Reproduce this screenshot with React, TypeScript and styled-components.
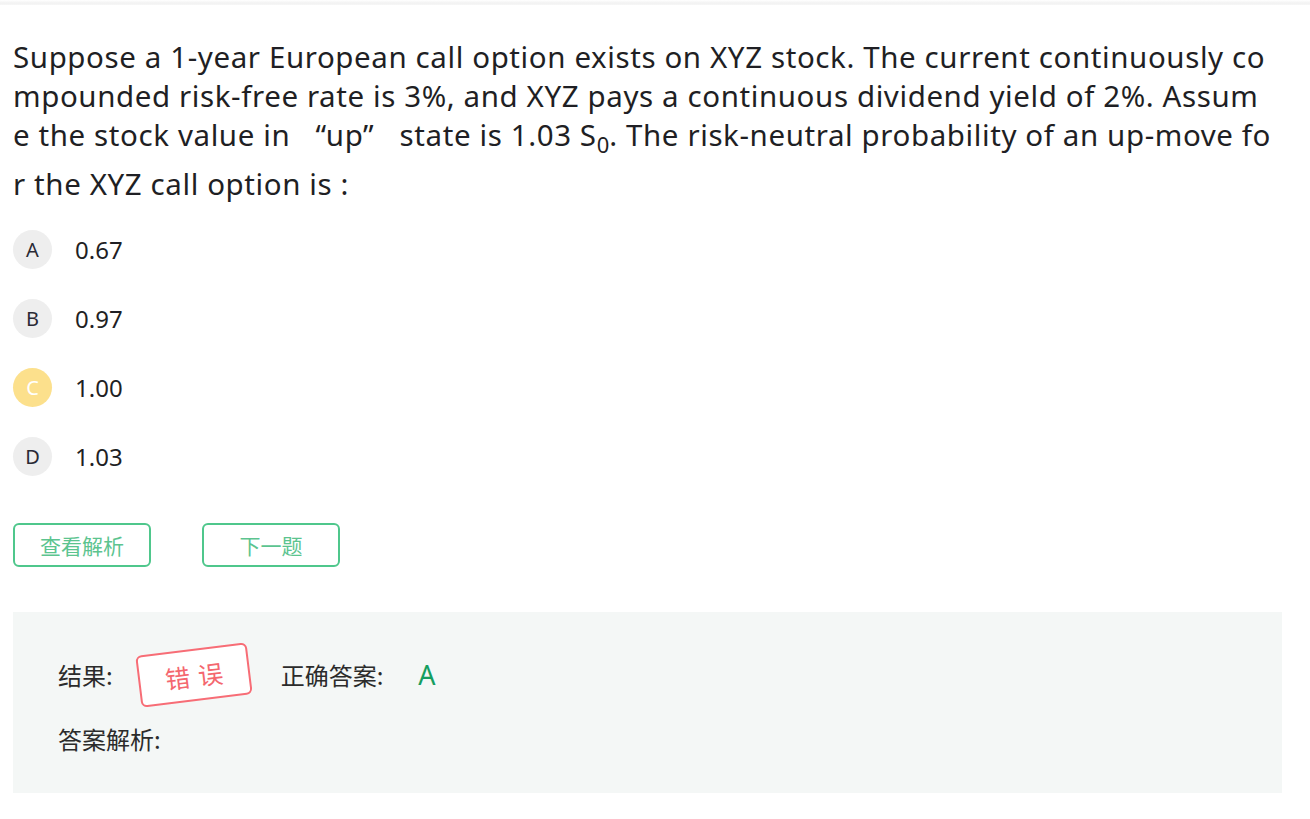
import styled, { createGlobalStyle } from 'styled-components'

const GlobalStyle = createGlobalStyle`
  body {
    margin: 0;
    background: #fff;
    font-family: "Noto Sans", "Noto Sans CJK SC", sans-serif;
    color: #222;
  }
`

const options = [
  { key: 'A', text: '0.67', picked: false },
  { key: 'B', text: '0.97', picked: false },
  { key: 'C', text: '1.00', picked: true },
  { key: 'D', text: '1.03', picked: false },
]

function App() {
  return (
    <>
      <GlobalStyle />
      <TopShade />
      <Page>
        <Question>
          Suppose a 1-year European call option exists on XYZ stock. The current continuously compounded
          risk-free rate is 3%, and XYZ pays a continuous dividend yield of 2%. Assume the stock value in{' '}
          <Quote>“up”</Quote>{' '}state is 1.03 S<sub>0</sub>. The risk-neutral probability of an up-move for
          the XYZ call option is :
        </Question>

        <OptionList>
          {options.map((o) => (
            <OptionRow key={o.key}>
              <Badge $picked={o.picked}>{o.key}</Badge>
              <OptionText>{o.text}</OptionText>
            </OptionRow>
          ))}
        </OptionList>

        <Actions>
          <OutlineButton>查看解析</OutlineButton>
          <OutlineButton>下一题</OutlineButton>
        </Actions>

        <ResultPanel>
          <ResultRow>
            <Label>结果:</Label>
            <Stamp>错误</Stamp>
            <Label>正确答案:</Label>
            <Answer>A</Answer>
          </ResultRow>
          <ResultRow>
            <Label>答案解析:</Label>
          </ResultRow>
        </ResultPanel>
      </Page>
    </>
  )
}

export default App

const TopShade = styled.div`
  height: 5px;
  background: linear-gradient(#ffffff 0, #f2f2f2 60%, #f7f7f7 100%);
`

const Page = styled.div`
  width: 1269px;
  padding: 32px 0 0 13px;
`

const Question = styled.div`
  width: 1260px;
  font-size: 29.5px;
  line-height: 39px;
  letter-spacing: 0.6px;
  color: #1f1f24;
  word-break: break-all;

  sub {
    font-size: 22px;
    letter-spacing: 0;
  }
`

const Quote = styled.span`
  margin: 0 17px;
`

const OptionList = styled.div`
  display: flex;
  flex-direction: column;
  gap: 30px;
  margin-top: 27px;
`

const OptionRow = styled.div`
  display: flex;
  align-items: center;
  gap: 23px;
`

const Badge = styled.div<{ $picked: boolean }>`
  width: 39px;
  height: 39px;
  border-radius: 50%;
  display: flex;
  align-items: center;
  justify-content: center;
  font-size: 20px;
  background: ${(p) => (p.$picked ? '#fce08c' : '#eeeeee')};
  color: ${(p) => (p.$picked ? '#ffffff' : '#2a2a35')};
`

const OptionText = styled.span`
  font-size: 24px;
  color: #1f1f24;
`

const Actions = styled.div`
  display: flex;
  gap: 51px;
  margin-top: 47px;
`

const OutlineButton = styled.button`
  width: 138px;
  height: 44px;
  border: 2px solid #4fc78c;
  border-radius: 6px;
  background: #fff;
  color: #5cc48f;
  font-family: "Noto Sans CJK SC", sans-serif;
  font-size: 21px;
  cursor: pointer;
`

const ResultPanel = styled.div`
  margin-top: 45px;
  height: 181px;
  box-sizing: border-box;
  background: #f4f7f6;
  padding: 41px 45px 0;
  display: flex;
  flex-direction: column;
  gap: 20px;
`

const ResultRow = styled.div`
  display: flex;
  align-items: center;
  height: 44px;
`

const Label = styled.span`
  font-family: "Noto Sans CJK SC", sans-serif;
  font-size: 24px;
  color: #2b2b2b;
`

const Stamp = styled.span`
  display: inline-flex;
  align-items: center;
  justify-content: center;
  width: 112px;
  height: 52px;
  margin: 0 31px 0 25px;
  box-sizing: border-box;
  border: 2px solid #f76d76;
  border-radius: 6px;
  background: #fff;
  color: #f4676f;
  font-family: "Noto Sans CJK SC", sans-serif;
  font-size: 25px;
  letter-spacing: 8px;
  padding-left: 8px;
  transform: rotate(-7deg);
`

const Answer = styled.span`
  margin-left: 35px;
  font-size: 27px;
  color: #159e60;
`
